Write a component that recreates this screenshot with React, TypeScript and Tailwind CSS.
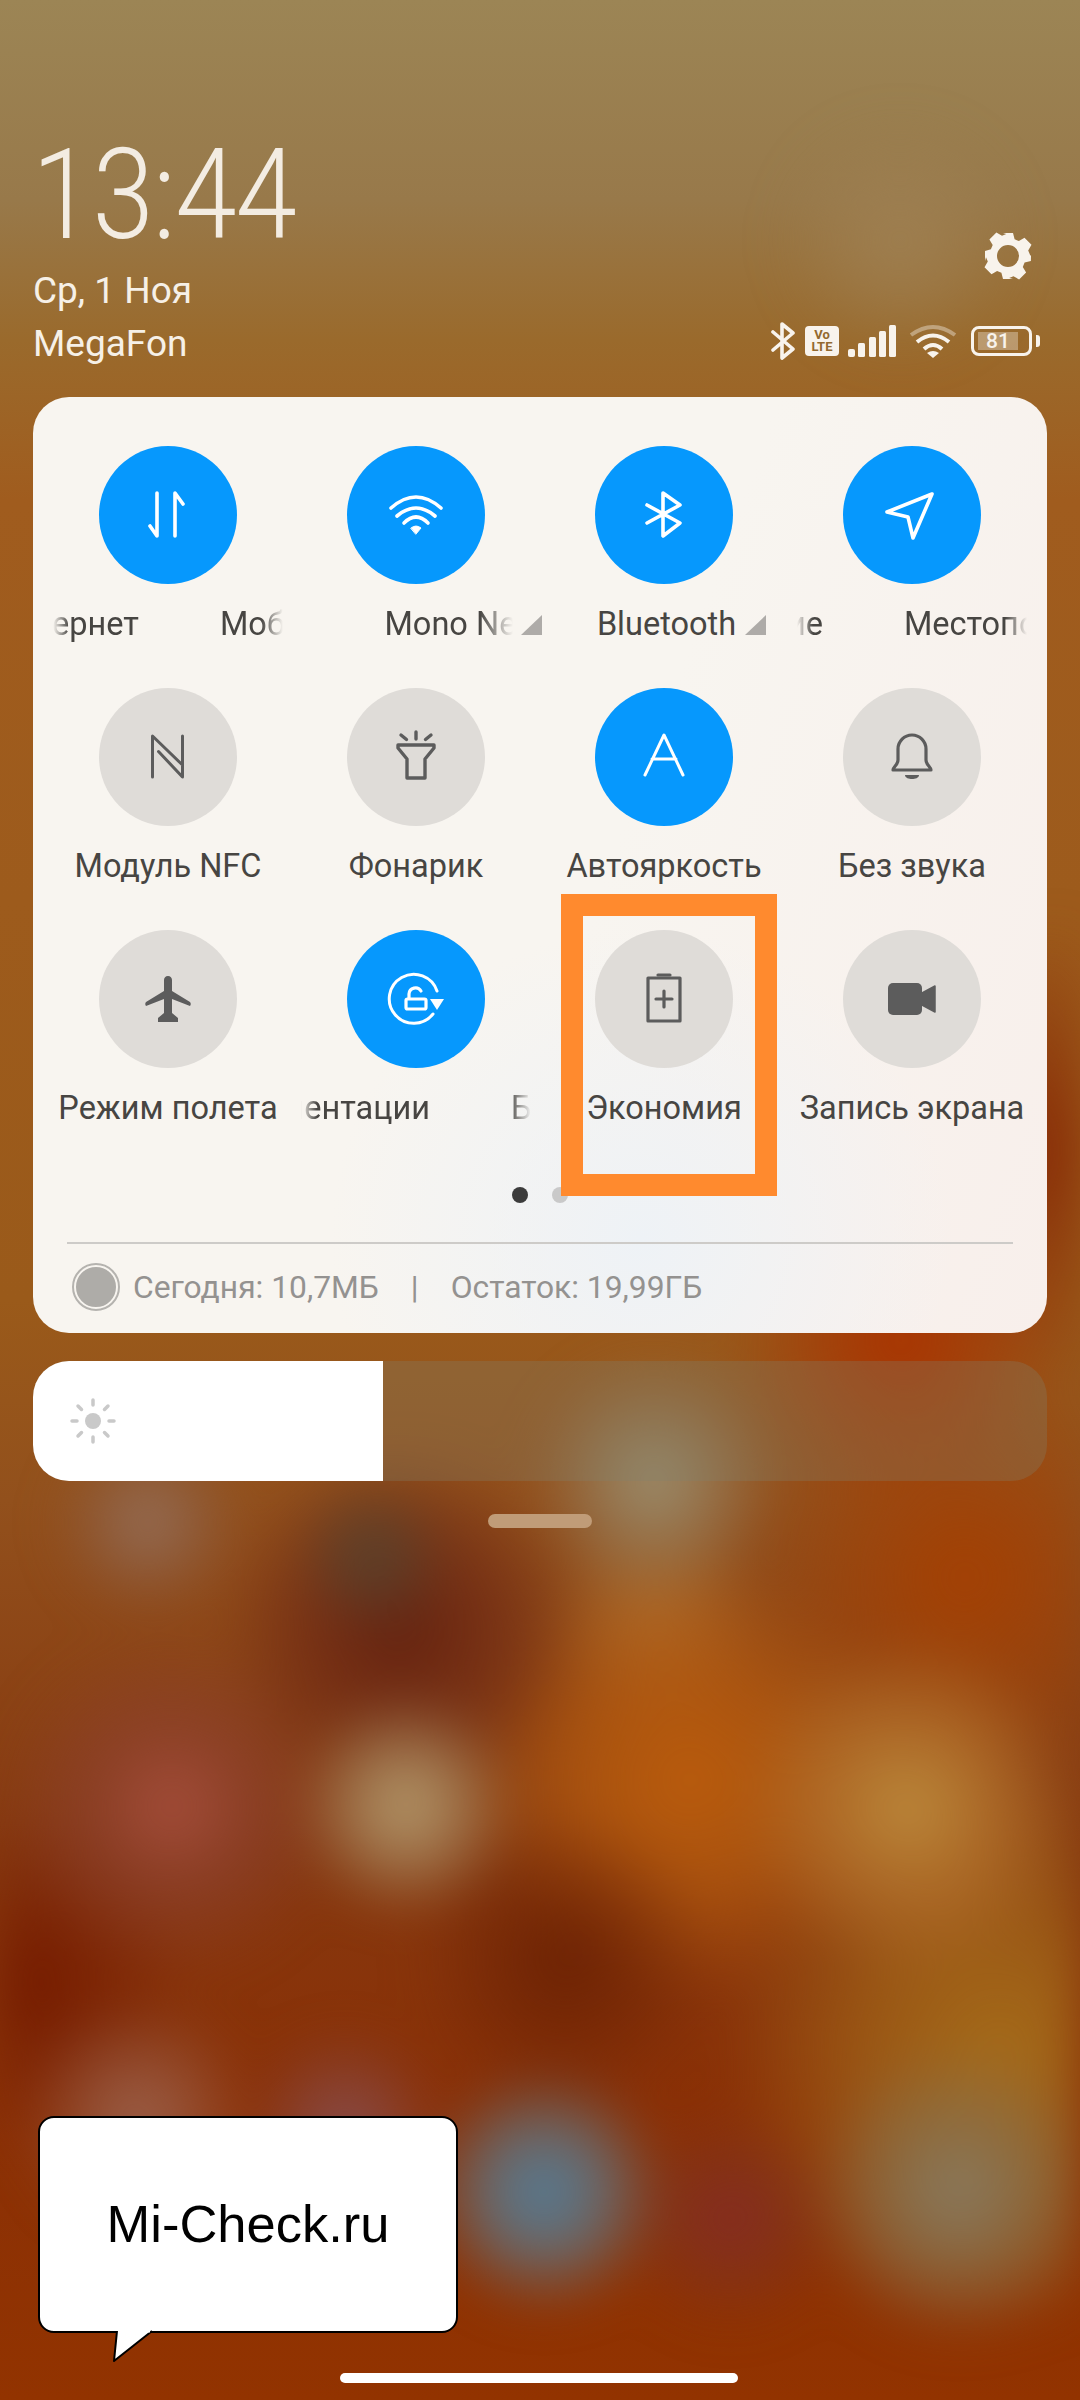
import React from "react";

const bg =
  "bg-[radial-gradient(circle_at_406px_1806px,rgba(182,155,108,1),rgba(165,130,90,0.85)_45px,transparent_112px),radial-gradient(circle_at_544px_2192px,rgba(80,125,155,1),rgba(100,115,125,0.85)_55px,transparent_122px),radial-gradient(circle_at_148px_1522px,rgba(150,115,95,0.95),rgba(140,100,80,0.5)_50px,transparent_95px),radial-gradient(circle_at_654px_1480px,rgba(155,145,115,1),rgba(150,125,90,0.7)_60px,transparent_125px),radial-gradient(circle_at_372px_1556px,rgba(85,68,48,0.95),transparent_80px),radial-gradient(circle_at_400px_1630px,rgba(100,34,16,1),rgba(110,40,20,0.7)_90px,transparent_180px),radial-gradient(circle_at_172px_1806px,rgba(165,78,60,1),rgba(140,65,50,0.6)_80px,transparent_170px),radial-gradient(circle_at_909px_1806px,rgba(188,138,60,1),rgba(180,115,45,0.75)_85px,transparent_170px),radial-gradient(circle_at_957px_2192px,rgba(136,122,96,1),rgba(135,115,80,0.7)_70px,transparent_150px),radial-gradient(circle_at_730px_2219px,rgba(135,42,36,1),rgba(125,50,35,0.6)_50px,transparent_110px),radial-gradient(circle_at_138px_2120px,rgba(155,98,78,1),transparent_120px),radial-gradient(circle_at_345px_2130px,rgba(135,78,80,1),transparent_100px),radial-gradient(circle_at_565px_1962px,rgba(108,34,4,1),transparent_150px),radial-gradient(circle_at_20px_1982px,rgba(116,26,0,1),transparent_170px),radial-gradient(circle_at_690px_1780px,rgba(186,92,12,1),rgba(180,90,15,0.75)_110px,transparent_220px),radial-gradient(circle_at_654px_1620px,rgba(175,115,50,0.9),transparent_110px),radial-gradient(circle_at_1000px_2050px,rgba(165,108,26,1),rgba(160,100,25,0.75)_130px,transparent_280px),radial-gradient(circle_at_965px_1577px,rgba(164,64,3,1),transparent_210px),radial-gradient(circle_at_900px_1340px,rgba(170,50,0,1),transparent_170px),radial-gradient(circle_at_1080px_1150px,rgba(135,40,5,1),transparent_230px),radial-gradient(circle_at_900px_240px,rgba(160,130,85,0.8),transparent_120px)]";

function Ic({ children, sw = "3.600" }: { children: React.ReactNode; sw?: string }) {
  return (
    <svg viewBox="0 0 60 60" className="w-[60px] h-[60px]" fill="none" stroke="currentColor" strokeWidth={sw} strokeLinecap="round" strokeLinejoin="round">
      {children}
    </svg>
  );
}

function Toggle({ on, icon, children }: { on?: boolean; icon: React.ReactNode; children: React.ReactNode }) {
  return (
    <div className="flex flex-col items-center w-[248px]">
      <div className={`w-[138px] h-[138px] rounded-full flex items-center justify-center ${on ? "bg-[#0698fd] text-white" : "bg-[#dfdcd8] text-[#5c5c5c]"}`}>
        {icon}
      </div>
      <div className="mt-[14px] h-[52px] w-full flex items-center justify-center text-[32.5px] leading-[52px] text-[#474542] whitespace-nowrap">
        {children}
      </div>
    </div>
  );
}

const fade = "[mask-image:linear-gradient(90deg,transparent,black_16px,black_calc(100%-22px),transparent)]";

// label that is midway through its marquee scroll
function Marquee({ text, tail }: { text: string; tail: string }) {
  return (
    <div className={`w-[230px] overflow-hidden flex gap-[81px] ${fade}`}>
      <span className={`flex-none flex justify-end ${tail}`}>
        <span className="flex-none">{text}</span>
      </span>
      <span className="flex-none">{text}</span>
    </div>
  );
}

function Tri() {
  return <div className="flex-none w-0 h-0 border-l-[21px] border-l-transparent border-b-[20px] border-b-[#aeaba8] mt-[2px]" />;
}

export default function App() {
  return (
    <div className="relative w-[1080px] h-[2400px] overflow-hidden font-['Roboto',sans-serif] bg-[linear-gradient(180deg,#9c8555_0px,#98794a_200px,#9a6a2c_340px,#a05c1e_500px,#9a5a1a_1300px,#92501c_1500px,#86380f_1850px,#8a3006_2100px,#923300_2400px)]">
      {/* Blurred wallpaper */}
      <div className={`absolute inset-0 blur-[24px] ${bg}`} />

      <div className="relative h-full">
        {/* Status header */}
        <div className="flex justify-between pt-[130px] pl-[33px] pr-[40px] h-[397px]">
          <div className="text-[#f6f0e7]">
            <div className="text-[127px] leading-[130px] font-light scale-x-[0.87] origin-left tracking-[-1px] ml-[-1px] text-[#f3ece2]">13:44</div>
            <div className="mt-[4px] text-[37px] leading-[53px]">Ср, 1 Ноя</div>
            <div className="text-[37px] leading-[53px]">MegaFon</div>
          </div>
          <div className="flex flex-col items-end text-[#f8f3ec]">
            <svg viewBox="0 0 48 48" className="w-[48px] h-[48px] mt-[102px] mr-[8px]" fill="currentColor">
              <path fillRule="evenodd" d="M19 1h10l1.600 6.300 4.300 1.800 5.600-3.300 7 7-3.300 5.600 1.800 4.300L47 24l-.1 5-6.300 1.600-1.800 4.300 3.300 5.600-7 7-5.600-3.300-4.300 1.800L29 47H19l-1.600-6.300-4.300-1.800-5.600 3.300-7-7 3.300-5.600-1.800-4.300L1 29V19l5.900-1.700 1.800-4.300-3.300-5.600 7-7 5.600 3.300 4.300-1.800zM24 13a11 11 0 1 0 0 22 11 11 0 0 0 0-22z" />
            </svg>
            <div className="mt-[42px] flex items-center">
              <svg viewBox="0 0 24 38" className="w-[24px] h-[38px]" fill="none" stroke="currentColor" strokeWidth="3.600" strokeLinecap="round" strokeLinejoin="round">
                <path d="M2 10 22 27 11 36V2l11 9L2 28" />
              </svg>
              <div className="ml-[10px] w-[34px] h-[30px] rounded-[4px] bg-[#f8f3ec] text-[#93692f] text-[13px] leading-[12px] font-bold flex flex-col items-center justify-center">
                <span>Vo</span>
                <span>LTE</span>
              </div>
              <svg viewBox="0 0 48 32" className="ml-[9px] w-[48px] h-[32px]" fill="currentColor">
                <rect x="0" y="24" width="7" height="8" rx="2" />
                <rect x="10" y="18" width="7" height="14" rx="1.500" />
                <rect x="21" y="12" width="7" height="20" rx="1.500" />
                <rect x="31" y="6" width="7" height="26" rx="1.500" />
                <rect x="41" y="0" width="7" height="32" rx="1.500" />
              </svg>
              <svg viewBox="0 0 48 34" className="ml-[13px] w-[48px] h-[34px]" fill="none" stroke="currentColor" strokeWidth="4" strokeLinecap="butt">
                <path d="M2 11Q24-5 46 11" opacity="0.4" />
                <path d="M8 18Q24 5 40 18" />
                <path d="M15 25Q24 17 33 25" />
                <path d="M18 29Q24 25 30 29L24 34Z" fill="currentColor" stroke="none" />
              </svg>
              <div className="ml-[14px] relative w-[61px] h-[30px] rounded-[8px] border-[3px] border-[#f8f3ec] flex items-center">
                <div className="ml-[4px] w-[40px] h-[18px] bg-[#f8f3ec]/35 flex items-center justify-center text-[21px] font-medium leading-none">81</div>
                <div className="absolute right-[-11px] w-[4px] h-[12px] rounded-r-[3px] bg-[#f8f3ec]" />
              </div>
              <div className="w-[8px]" />
            </div>
          </div>
        </div>

        {/* Quick settings panel */}
        <div className="relative mx-[33px] h-[936px] rounded-[36px] bg-[radial-gradient(circle_at_60%_90%,#eef2f6,transparent_30%),linear-gradient(110deg,#f8f5f0_55%,#f8efeb)] px-[11px] pt-[49px]">
          <div className="grid grid-cols-4 gap-y-[38px]">
            <Toggle on icon={<Ic><path d="M19 8v43l-7-10M37 51V8l8 11" /></Ic>}>
              <Marquee text="Мобильный интернет" tail="w-[86px]" />
            </Toggle>
            <Toggle on icon={<Ic>
              <path d="M5 23Q30 1 55 23" />
              <path d="M11 31Q30 15 49 31" />
              <path d="M18 38Q30 26 42 38" />
              <path d="M25 43Q30 39 35 43L30 49Z" fill="currentColor" strokeWidth="1" />
            </Ic>}>
              <div className="flex-none flex items-center ml-[94px]">
                <div className="w-[128px] overflow-hidden [mask-image:linear-gradient(90deg,black_95px,transparent)]">Mono Network</div>
                <div className="ml-[8px]"><Tri /></div>
              </div>
            </Toggle>
            <Toggle on icon={<Ic><path d="M13 20 46 38 29 51V8L46 20 13 38" /></Ic>}>
              <div className="flex-none flex items-center ml-[35px]">
                <span>Bluetooth</span>
                <div className="ml-[9px]"><Tri /></div>
              </div>
            </Toggle>
            <Toggle on icon={<Ic><path d="M50 9 5 27l21 5 5 21Z" /></Ic>}>
              <Marquee text="Местоположение" tail="w-[26px]" />
            </Toggle>

            <Toggle icon={<Ic sw="3"><path d="M14.500 50V9L44.500 38M44.500 9V50L20.500 24.500" /></Ic>}>Модуль NFC</Toggle>
            <Toggle icon={<Ic sw="3.400">
              <path d="M12 18h36v3l-9 11v19H21V32l-9-11Z" />
              <path d="M30 5v7M15 8l5.500 4.500M45 8l-5.500 4.500" />
            </Ic>}>Фонарик</Toggle>
            <Toggle on icon={<Ic sw="3"><path d="M11 48 30 8l19 40M18 32h24" /></Ic>}>Автояркость</Toggle>
            <Toggle icon={<Ic sw="3.200">
              <path d="M11 43h38c0-3-5-5-5-10V22a14 14 0 0 0-28 0v11c0 5-5 7-5 10Z" />
              <path d="M23 48h14c0 3-4 4-7 4s-7-1-7-4Z" fill="currentColor" stroke="none" />
            </Ic>}>Без звука</Toggle>

            <Toggle icon={<Ic>
              <path fill="currentColor" stroke="none" d="M30 7c-2.500 0-4 2-4 4v11L8 33c-1 1-1 3 0 4l18-7v14l-6 5v4h20v-4l-6-5V30l18 7c1-1 1-3 0-4L34 22V11c0-2-1.500-4-4-4Z" />
            </Ic>}>Режим полета</Toggle>
            <Toggle on icon={<Ic sw="3.200">
              <path d="M47 45A24.500 24.500 0 1 1 51 22" strokeWidth="3" />
              <path fill="currentColor" stroke="none" d="M44 30h14l-7 11Z" />
              <rect x="20" y="30" width="20" height="10" rx="1.500" />
              <path d="M23 29v-4a6.500 6.500 0 0 1 12-3" />
            </Ic>}>
              <Marquee text="Блокировка ориентации" tail="w-[129px]" />
            </Toggle>
            <Toggle icon={<Ic sw="3.200">
              <path d="M14 9h32v43H14Z" />
              <path d="M24 6h12M22 30h16M30 22v16" />
            </Ic>}>Экономия</Toggle>
            <Toggle icon={<Ic>
              <rect x="6" y="14" width="34" height="32" rx="5" fill="currentColor" stroke="none" />
              <path d="M40 24l13-7v26l-13-7Z" fill="currentColor" strokeWidth="1.500" />
            </Ic>}>Запись экрана</Toggle>
          </div>

          {/* Page dots */}
          <div className="flex justify-center gap-[24px] mt-[53px]">
            <span className="w-[16px] h-[16px] rounded-full bg-[#3c3c3c]" />
            <span className="w-[16px] h-[16px] rounded-full bg-[#c9c9c9]" />
          </div>

          <div className="mx-[23px] mt-[39px] h-[2px] bg-[#cdcbc8]" />

          <div className="mx-[30px] mt-[21px] flex items-center text-[31.8px] leading-[44px] text-[#949290]">
            <span className="w-[44px] h-[44px] rounded-full bg-[#aeaca8] border-[2px] border-[#f8f5f0] outline-[2px] outline-[#b5b3af]" />
            <span className="ml-[15px]">Сегодня: 10,7МБ</span>
            <span className="ml-[32px]">|</span>
            <span className="ml-[32px]">Остаток: 19,99ГБ</span>
          </div>

          {/* Orange highlight drawn on top of the tile */}
          <div className="absolute left-[528px] top-[497px] w-[216px] h-[302px] border-[22px] border-[#ff8a2e]" />
        </div>

        {/* Brightness slider */}
        <div className="mx-[33px] mt-[28px] h-[120px] rounded-[36px] overflow-hidden flex bg-[#80806e]/30">
          <div className="w-[350px] bg-white flex items-center pl-[37px] text-[#c9c9c9]">
            <svg viewBox="0 0 46 46" className="w-[46px] h-[46px]" fill="currentColor" stroke="currentColor" strokeWidth="3.500" strokeLinecap="round">
              <circle cx="23" cy="23" r="8" stroke="none" />
              <path d="M23 2v5M23 39v5M2 23h5M39 23h5M8 8l3.500 3.500M34.500 34.500 38 38M8 38l3.500-3.500M34.500 11.500 38 8" fill="none" />
            </svg>
          </div>
        </div>

        {/* Drag handle */}
        <div className="mt-[33px] mx-auto w-[104px] h-[14px] rounded-full bg-[#c09c78]" />

        {/* Watermark bubble */}
        <div className="absolute left-[38px] top-[2116px] w-[420px] h-[217px] rounded-[16px] border-[2.500px] border-black bg-white flex items-center justify-center text-[52.5px] text-black font-['Liberation_Sans',sans-serif]">
          Mi-Check.ru
        </div>
        <svg viewBox="0 0 44 34" className="absolute left-[111px] top-[2329px] w-[44px] h-[34px]">
          <path d="M6 2 3 32 41 2" fill="white" stroke="black" strokeWidth="2" strokeLinejoin="round" />
          <path d="M7 0h32v3.500H7Z" fill="white" />
        </svg>

        {/* Home bar */}
        <div className="absolute left-[340px] top-[2373px] w-[398px] h-[10px] rounded-full bg-white" />
      </div>
    </div>
  );
}
